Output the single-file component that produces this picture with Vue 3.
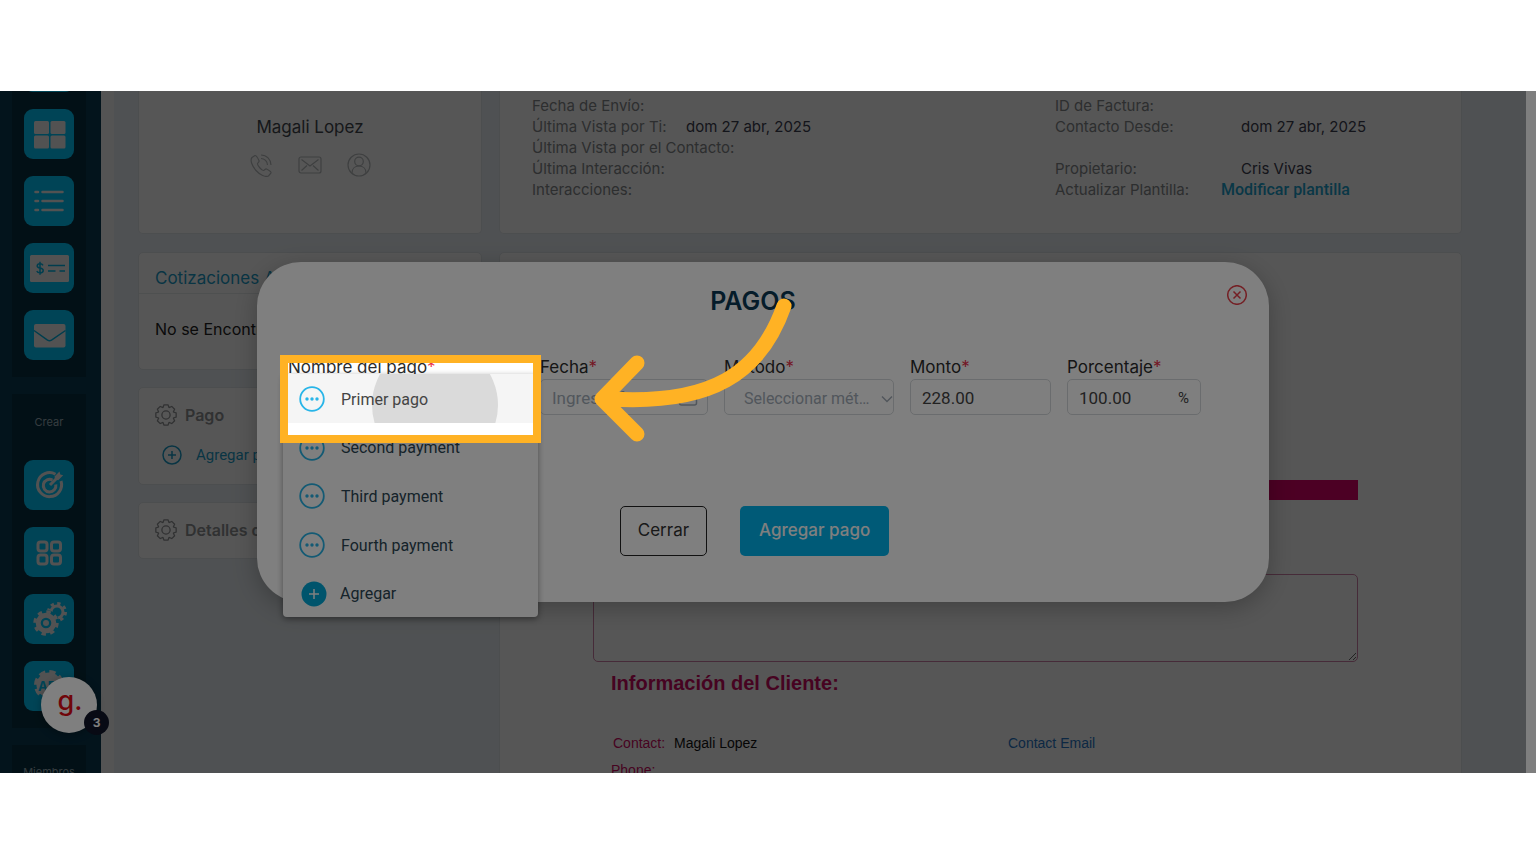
<template>
  <div class="stage">
    <div class="frame">
      <aside class="sidebar">
        <nav class="side-group first">
          <button v-for="item in mainItems" :key="item" class="side-btn" :aria-label="item">
            <svg v-if="item === 'Tablero'" viewBox="0 0 50 50">
              <rect x="10" y="12" width="15" height="13" rx="1.5" /><rect x="26.5" y="12" width="15" height="13" rx="1.5" />
              <rect x="10" y="26.5" width="15" height="13" rx="1.5" /><rect x="26.5" y="26.5" width="15" height="13" rx="1.5" />
            </svg>
            <svg v-else-if="item === 'Lista'" viewBox="0 0 50 50">
              <path class="line thin" d="M11.5 16h2.500M18.500 16h20M11.500 25h2.500M18.500 25h20M11.500 34h2.500M18.500 34h20" />
            </svg>
            <svg v-else-if="item === 'Facturas'" viewBox="0 0 50 50">
              <rect x="6" y="12" width="39" height="27" rx="1.5" />
              <path class="cut" d="M24 22.500h17M24 28h7.500M35.500 28h5.500" />
              <path class="cut" d="M19 22.300c-.6-1.200-1.600-1.600-3-1.600-1.700 0-2.800.9-2.800 2.200 0 3.100 6 1.300 6 4.500 0 1.400-1.200 2.400-3.100 2.400-1.600 0-2.800-.6-3.300-1.900M16 18.700v13" />
            </svg>
            <svg v-else-if="item === 'Correo'" viewBox="0 0 50 50">
              <rect x="10" y="14" width="31.5" height="23.5" rx="2" />
              <path class="cut" d="M10 20.500l13.500 9.600q2 1.200 4 0L41.500 20.500" />
            </svg>
          </button>
        </nav>
        <nav class="side-group second">
          <span class="side-title">Crear</span>
          <button v-for="item in createItems" :key="item" class="side-btn" :aria-label="item">
            <svg v-if="item === 'Objetivo'" viewBox="0 0 50 50">
              <path class="line" d="M31.500 14.200A12 12 0 1 0 37 21M28.500 20A6.300 6.300 0 1 0 31.800 24.500" />
              <path class="line" d="M26 25l7-7" />
              <path d="M30.500 16.500l5-5 .8 3 2.900.8-5 5-3-.8z" />
            </svg>
            <svg v-else-if="item === 'Módulos'" viewBox="0 0 50 50">
              <g class="line">
                <rect x="14" y="15" width="9" height="9" rx="2.5" /><rect x="27.5" y="15" width="9" height="9" rx="2.5" />
                <rect x="14" y="28" width="9" height="9" rx="2.5" /><rect x="27.5" y="28" width="9" height="9" rx="2.5" />
              </g>
            </svg>
            <svg v-else-if="item === 'Ajustes'" viewBox="0 0 50 50">
              <circle class="line" cx="33" cy="18" r="6" />
              <circle class="teeth" cx="33" cy="18" r="8.5" />
              <circle class="halo" cx="22" cy="29" r="13" />
              <circle class="line wide" cx="22" cy="29" r="7.8" />
              <circle class="teeth big" cx="22" cy="29" r="11.2" />
              <circle cx="22" cy="29" r="3" />
            </svg>
            <svg v-else viewBox="0 0 50 50">
              <circle cx="25" cy="24" r="12.5" />
              <circle class="teeth api" cx="25" cy="24" r="13" />
              <text x="25" y="30" text-anchor="middle">API</text>
            </svg>
          </button>
        </nav>
        <div class="side-group third"><span class="side-title">Miembros</span></div>
      </aside>

      <main class="content">
        <section class="card contact">
          <p class="contact-name">Magali Lopez</p>
          <div class="contact-icons">
            <svg viewBox="0 0 24 24"><path d="M6 2.500 3 4.500C.8 7 3 13 7 17.500s9.500 7 12.500 5.500l2.500-3c.5-1-.3-1.800-4.500-4-1-.5-2 1.200-3 1.500-1.500.3-6.500-5.300-6-7 .2-.8 2-1.500 1.600-2.700C8.300 4 7.500 2.200 6 2.500zM12 2c5.500 0 10 4.500 10 10M12 5.500c3.500 0 6.500 3 6.500 6.500" /></svg>
            <svg viewBox="0 0 24 24"><rect x="1" y="4" width="22" height="16" rx="2" /><path d="M3.500 6.500 12 13l8.500-6.500M3.500 17.500l5.500-5M20.500 17.500l-5.500-5" /></svg>
            <svg viewBox="0 0 24 24"><circle cx="12" cy="12" r="11" /><circle cx="12" cy="8.5" r="4.3" /><path d="M5 20c0-4.500 3-7 7-7s7 2.500 7 7" /></svg>
          </div>
        </section>

        <section class="card details">
          <dl class="detail-list">
            <template v-for="row in leftDetails" :key="row.label">
              <dt>{{ row.label }}</dt>
              <dd>{{ row.value }}</dd>
            </template>
          </dl>
          <dl class="detail-list wide">
            <template v-for="row in rightDetails" :key="row.label">
              <dt>{{ row.label }}</dt>
              <dd><a v-if="row.link" href="#">{{ row.value }}</a><template v-else>{{ row.value }}</template></dd>
            </template>
          </dl>
        </section>

        <div class="side-cards">
          <section class="card quotes">
            <h2>Cotizaciones Asociadas</h2>
            <p>No se Encontraron Datos</p>
          </section>
          <section class="card payment">
            <h3><svg class="gear" viewBox="0 0 24 24"><path :d="gearPath" /><circle cx="12" cy="12" r="4.5" /></svg>Pago</h3>
            <a href="#" class="add-link">
              <svg viewBox="0 0 20 20"><circle cx="10" cy="10" r="9" /><path d="M10 6v8M6 10h8" /></svg>
              Agregar pago
            </a>
          </section>
          <section class="card extra">
            <h3><svg class="gear" viewBox="0 0 24 24"><path :d="gearPath" /><circle cx="12" cy="12" r="4.5" /></svg>Detalles de pago</h3>
          </section>
        </div>

        <section class="card invoice">
          <div class="band"></div>
          <textarea aria-label="Notas"></textarea>
          <h2>Información del Cliente:</h2>
          <div class="client-row">
            <span><span class="pink">Contact:</span> Magali Lopez</span>
            <a href="#">Contact Email</a>
          </div>
          <div class="pink phone">Phone:</div>
        </section>
      </main>

      <div class="scroll-track"></div>

      <div class="backdrop">
        <div class="widget">
          <span class="widget-logo">g.</span>
          <span class="widget-count">3</span>
        </div>

        <div class="modal" role="dialog" aria-labelledby="modal-title">
          <header class="modal-head">
            <h1 id="modal-title">PAGOS</h1>
            <button class="close-btn" aria-label="Cancelar">
              <svg viewBox="0 0 20 20"><circle cx="10" cy="10" r="9.3" /><path d="M6.500 6.500l7 7M13.500 6.500l-7 7" /></svg>
            </button>
          </header>

          <form class="fields" @submit.prevent>
            <div class="field">
              <label for="name">Nombre del pago<i>*</i></label>
              <input id="name" type="text" />
              <ul class="menu">
                <li v-for="(option, i) in options" :key="option">
                  <button type="button" :class="{ hovered: i === 0 }">
                    <svg class="dots" viewBox="0 0 26 26"><circle class="ring" cx="13" cy="13" r="11.8" /><circle cx="8" cy="13" r="1.7" /><circle cx="13" cy="13" r="1.7" /><circle cx="18" cy="13" r="1.7" /></svg>
                    <span>{{ option }}</span>
                  </button>
                </li>
                <li>
                  <button type="button" class="add">
                    <svg class="plus" viewBox="0 0 26 26"><circle cx="13" cy="13" r="12.5" /><path d="M13 8v10M8 13h10" /></svg>
                    <span>Agregar</span>
                  </button>
                </li>
              </ul>
            </div>
            <div class="field">
              <label for="date">Fecha<i>*</i></label>
              <div class="control">
                <input id="date" type="text" placeholder="Ingresar fecha" />
                <svg class="calendar" viewBox="0 0 20 20"><rect x="1.5" y="3" width="17" height="15" rx="2" /><path d="M1.500 8h17M6 1v4M14 1v4" /></svg>
              </div>
            </div>
            <div class="field">
              <label for="method">Método<i>*</i></label>
              <div class="control">
                <select id="method"><option>Seleccionar método</option></select>
                <svg class="chevron" viewBox="0 0 12 12"><path d="M1 3.500l5 5 5-5" /></svg>
              </div>
            </div>
            <div class="field">
              <label for="amount">Monto<i>*</i></label>
              <input id="amount" v-model="amount" type="text" />
            </div>
            <div class="field">
              <label for="percent">Porcentaje<i>*</i></label>
              <div class="control">
                <input id="percent" v-model="percent" type="text" />
                <span class="unit">%</span>
              </div>
            </div>
          </form>

          <footer class="actions">
            <button class="btn outline">Cerrar</button>
            <button class="btn primary">Agregar pago</button>
          </footer>

          <div class="spotlight"></div>
          <svg class="arrow" viewBox="590 290 210 160">
            <path d="M784 306C760 374 711 405 610 399M637 363L602 399L637 434" />
          </svg>
        </div>
      </div>
    </div>
  </div>
</template>

<script setup>
import { ref } from 'vue';

const mainItems = ['Inicio', 'Tablero', 'Lista', 'Facturas', 'Correo'];
const createItems = ['Objetivo', 'Módulos', 'Ajustes', 'API'];

const leftDetails = [
  { label: 'Fecha de Envío:', value: '' },
  { label: 'Última Vista por Ti:', value: 'dom 27 abr, 2025' },
  { label: 'Última Vista por el Contacto:', value: '' },
  { label: 'Última Interacción:', value: '' },
  { label: 'Interacciones:', value: '' }
];

const rightDetails = [
  { label: 'ID de Factura:', value: '' },
  { label: 'Contacto Desde:', value: 'dom 27 abr, 2025' },
  { label: '', value: '' },
  { label: 'Propietario:', value: 'Cris Vivas' },
  { label: 'Actualizar Plantilla:', value: 'Modificar plantilla', link: true }
];

const options = ['Primer pago', 'Second payment', 'Third payment', 'Fourth payment'];

const amount = ref('228.00');
const percent = ref('100.00');

// contorno del engranaje de 8 dientes
const gearPath = Array.from({ length: 8 }, (_, i) => {
  return [[-22, 8.8], [-11, 11.3], [11, 11.3], [22, 8.8]].map(([offset, r], j) => {
    const a = ((i * 45 + offset) * Math.PI) / 180;
    return `${i + j === 0 ? 'M' : 'L'}${(12 + r * Math.sin(a)).toFixed(2)} ${(12 - r * Math.cos(a)).toFixed(2)}`;
  }).join('');
}).join('') + 'Z';
</script>

<style>
body {
  margin: 0;
  background: #fff;
}
</style>

<style scoped>
* {
  box-sizing: border-box;
}

.stage {
  display: flex;
  min-height: 100vh;
  padding: 91px 0;
  font-family: Inter, "Noto Sans", sans-serif;
}

.frame {
  position: relative;
  display: flex;
  flex: 1;
  height: calc(100vh - 182px);
  overflow: hidden;
}

h1, h2, h3, p, dl, dd, ul {
  margin: 0;
  padding: 0;
}

a {
  text-decoration: none;
}

button {
  padding: 0;
  border: 0;
  background: none;
  font-family: inherit;
  cursor: pointer;
}

svg {
  display: block;
}

/* sidebar */
.sidebar {
  flex: none;
  display: flex;
  flex-direction: column;
  gap: 17px;
  width: 101px;
  padding: 0 15px 0 12px;
  background: #0a3b54;
}

.side-group {
  flex: none;
  display: flex;
  flex-direction: column;
  align-items: center;
  gap: 17px;
  background: #083142;
}

.first {
  margin-top: -49px;
  padding-bottom: 17px;
}

.second {
  padding: 20px 0 17px;
}

.third {
  padding-top: 19px;
  flex: 1;
}

.side-title {
  height: 29px;
  line-height: 16px;
  font-size: 11px;
  color: #9fb3bd;
}

.side-btn {
  width: 50px;
  height: 50px;
  border-radius: 9px;
  background: #00caff;
}

.side-btn svg {
  fill: #f4f4f4;
}

.side-btn text {
  font-size: 13px;
  font-weight: 700;
  fill: #00caff;
}

.side-btn .line {
  fill: none;
  stroke: #f4f4f4;
  stroke-width: 3;
}

.side-btn .thin {
  stroke-width: 2.5;
  stroke-linecap: round;
}

.side-btn .cut {
  fill: none;
  stroke: #00b6e6;
  stroke-width: 1.5;
}

.side-btn .wide {
  stroke-width: 5;
}

.side-btn .halo {
  fill: #00caff;
}

.side-btn .teeth {
  fill: none;
  stroke: #f4f4f4;
  stroke-width: 3;
  stroke-dasharray: 3.3 3.37;
}

.side-btn .big {
  stroke-dasharray: 4.4 4.4;
}

.side-btn .api {
  stroke-width: 4;
  stroke-dasharray: 6.2 4;
}

/* page */
.content {
  flex: 1;
  display: grid;
  grid-template-columns: minmax(0, 344fr) minmax(0, 963fr);
  grid-template-rows: 143px 1fr;
  gap: 18px 17px;
  padding: 0 64px 0 24px;
  border-left: 13px solid #fafafa;
  background: #ebf0f5;
}

.scroll-track {
  flex: none;
  width: 10px;
  background: #fff;
}

.card {
  border: 1px solid #e0e6ea;
  border-radius: 5px;
  background: #fff;
}

.contact,
.details {
  border-top: 0;
  border-radius: 0 0 5px 5px;
}

.contact {
  padding-top: 24px;
  text-align: center;
}

.contact-name {
  line-height: 24px;
  font-size: 17px;
  color: #43484f;
}

.contact-icons {
  display: flex;
  justify-content: center;
  gap: 25px;
  padding-top: 14px;
}

.contact-icons svg {
  width: 24px;
  height: 24px;
  fill: none;
  stroke: #b8bcbe;
  stroke-width: 1.2;
}

.details {
  display: grid;
  grid-template-columns: 523fr 374fr;
  padding: 4px 32px 0;
}

.detail-list {
  display: grid;
  grid-template-columns: 154px 1fr;
  grid-auto-rows: 21px;
  align-content: start;
  line-height: 21px;
  font-size: 15px;
  white-space: nowrap;
  color: #3b4050;
}

.wide {
  grid-template-columns: 186px 1fr;
}

.detail-list dt {
  color: #85898c;
}

.detail-list a {
  margin-left: -20px;
  font: 500 16px/21px Roboto, sans-serif;
  color: #1ba3d0;
}

.side-cards {
  display: flex;
  flex-direction: column;
  gap: 17px;
}

.quotes {
  height: 118px;
}

.quotes h2 {
  padding: 13px 16px 3px;
  border-bottom: 1px solid #e8ecee;
  line-height: 24px;
  font-size: 17px;
  font-weight: 400;
  color: #1b9cc9;
}

.quotes p {
  padding: 23px 16px;
  line-height: 24px;
  font-size: 16px;
  color: #222;
}

.card h3 {
  display: flex;
  align-items: center;
  gap: 8px;
  line-height: 24px;
  font-size: 16px;
  font-weight: 600;
  color: #909294;
}

.gear {
  width: 22px;
  height: 22px;
  fill: none;
  stroke: #909294;
  stroke-width: 1.4;
}

.payment {
  height: 98px;
  padding: 15px 16px;
}

.extra {
  padding: 15px 16px 16px;
}

.add-link {
  display: flex;
  align-items: center;
  gap: 14px;
  padding: 16px 0 0 7px;
  line-height: 24px;
  font-family: Roboto, sans-serif;
  font-size: 15px;
  color: #1b9cc9;
}

.add-link svg {
  width: 20px;
  height: 20px;
  fill: none;
  stroke: currentColor;
  stroke-width: 1.5;
}

.invoice {
  padding: 227px 103px 0 93px;
  font-family: "Liberation Sans", Arial, sans-serif;
}

.band {
  height: 20px;
  background: #e2006a;
}

.invoice textarea {
  display: block;
  width: 100%;
  height: 88px;
  margin-top: 74px;
  border: 1px solid #d080a8;
  border-radius: 5px;
  background: #fff;
}

.invoice h2 {
  padding: 9px 18px 0;
  line-height: 24px;
  font-size: 20px;
  color: #d00a62;
}

.client-row {
  display: grid;
  grid-template-columns: 395fr 330fr;
  padding: 36px 20px 0;
  line-height: 24px;
  font-size: 14px;
  color: #111;
}

.client-row a {
  color: #2878c8;
}

.pink {
  color: #d00a62;
}

.client-row .pink {
  margin-right: 5px;
}

.phone {
  padding: 3px 18px;
  line-height: 24px;
  font-size: 14px;
}

/* dialog */
.backdrop {
  position: absolute;
  inset: 0 10px 0 0;
  display: flex;
  align-items: center;
  justify-content: center;
  background: rgba(0, 0, 0, 0.32);
}

.widget {
  position: absolute;
  left: 41px;
  bottom: 40px;
  width: 56px;
  height: 56px;
  border-radius: 50%;
  background: #fff;
  box-shadow: 0 2px 8px rgba(0, 0, 0, 0.3);
}

.widget-logo {
  display: block;
  padding-left: 2px;
  line-height: 48px;
  text-align: center;
  font-size: 27px;
  font-weight: 500;
  color: #e00a14;
}

.widget-count {
  position: absolute;
  right: -12px;
  bottom: -2px;
  width: 25px;
  height: 25px;
  border-radius: 50%;
  background: #101428;
  line-height: 25px;
  text-align: center;
  font-size: 12px;
  font-weight: 700;
  color: #fff;
}

.modal {
  position: relative;
  width: 100%;
  max-width: 1012px;
  padding: 23px 0 46px;
  border-radius: 44px;
  background: #fff;
  box-shadow: 0 6px 24px rgba(0, 0, 0, 0.25);
}

.modal-head {
  display: flex;
  align-items: flex-start;
  padding: 0 22px;
}

.modal-head h1 {
  flex: 1;
  line-height: 32px;
  text-align: center;
  font-size: 25px;
  font-weight: 600;
  color: #0b3954;
}

.close-btn svg {
  width: 20px;
  height: 20px;
  fill: none;
  stroke: #e8404a;
  stroke-width: 1.5;
}

.fields {
  display: grid;
  grid-template-columns: 236fr 168fr 170fr 141fr 134fr;
  gap: 16px;
  padding: 38px 68px 0 31px;
}

.field {
  position: relative;
  min-width: 0;
}

.field label {
  display: block;
  line-height: 24px;
  font-size: 17px;
  white-space: nowrap;
  color: #2c2c2c;
}

.field label i {
  font-style: normal;
  color: #e8304a;
}

.control {
  position: relative;
}

.field input,
.field select {
  display: block;
  width: 100%;
  height: 36px;
  padding: 1px 11px 0;
  border: 1px solid #d5d9dc;
  border-radius: 5px;
  background: #fff;
  font-family: Roboto, sans-serif;
  font-size: 17px;
  color: #444;
}

.field input::placeholder {
  color: #a3adb8;
}

.field select {
  appearance: none;
  padding: 2px 22px 0 19px;
  font-size: 16px;
  text-overflow: ellipsis;
  color: #a3adb8;
}

.control svg {
  position: absolute;
  fill: none;
  stroke: #a3adb8;
  stroke-width: 1.5;
}

.calendar {
  top: 8px;
  right: 10px;
  width: 20px;
  height: 20px;
}

.chevron {
  top: 14px;
  right: 1px;
  width: 12px;
  height: 12px;
}

.unit {
  position: absolute;
  top: 0;
  right: 12px;
  line-height: 39px;
  font-family: Roboto, sans-serif;
  font-size: 15px;
  color: #444;
}

.menu {
  position: absolute;
  z-index: 1;
  top: 19px;
  left: -5px;
  display: flex;
  flex-direction: column;
  width: 255px;
  height: 243px;
  border-radius: 4px;
  background: #fff;
  box-shadow: 0 2px 6px rgba(0, 0, 0, 0.4);
  list-style: none;
}

.menu li {
  flex: 1;
  display: flex;
}

.menu button {
  position: relative;
  flex: 1;
  display: flex;
  align-items: center;
  gap: 16px;
  overflow: hidden;
  padding: 2px 16px 0;
  font-family: Roboto, sans-serif;
  font-size: 16px;
  color: #2c4654;
}

.menu .hovered {
  background: #f5f5f5;
  color: #444;
}

.menu .hovered::before {
  content: "";
  position: absolute;
  top: -32px;
  left: 89px;
  width: 126px;
  height: 126px;
  border-radius: 50%;
  background: #dadada;
}

.menu svg,
.menu span {
  position: relative;
}

.menu svg {
  width: 26px;
  height: 26px;
}

.dots {
  fill: #28b5e8;
}

.dots .ring {
  fill: none;
  stroke: #28b5e8;
  stroke-width: 1.8;
}

.menu .add {
  gap: 13px;
  padding-left: 18px;
}

.plus {
  fill: #00a8d8;
}

.plus path {
  stroke: #fff;
  stroke-width: 1.5;
}

.actions {
  display: flex;
  justify-content: center;
  gap: 33px;
  padding: 91px 17px 0 0;
}

.btn {
  height: 50px;
  padding: 0 19px 2px;
  border-radius: 5px;
  font-size: 17px;
}

.outline {
  padding: 0 17px 2px;
  border: 1px solid #222;
  color: #333;
}

.primary {
  background: #00b4ee;
  font-weight: 500;
  color: #fff;
}

/* tour highlight */
.spotlight {
  position: absolute;
  z-index: 2;
  top: 93px;
  left: 23px;
  width: 261px;
  height: 88px;
  border: 8px solid #ffb224;
  box-shadow: 0 0 0 2000px rgba(0, 0, 0, 0.5);
}

.arrow {
  position: absolute;
  z-index: 3;
  top: 28px;
  left: 333px;
  width: 210px;
  height: 160px;
  fill: none;
  stroke: #ffb224;
  stroke-width: 15;
  stroke-linecap: round;
  stroke-linejoin: round;
}
</style>
